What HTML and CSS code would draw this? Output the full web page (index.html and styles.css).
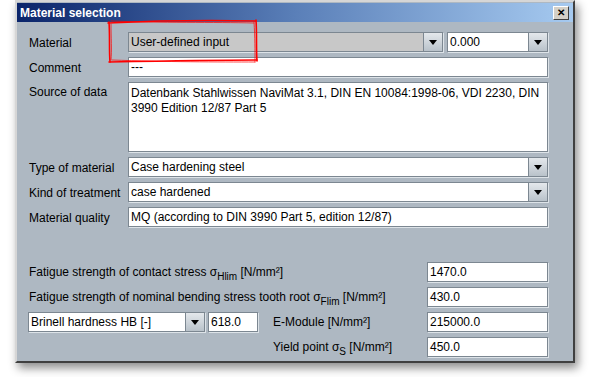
FILE: index.html
```html
<!DOCTYPE html>
<html lang="en">
<head>
  <meta charset="UTF-8" />
  <title>Material selection</title>
  <link rel="stylesheet" href="styles.css">
</head>
<body>
  <div class="window">
    <div class="titlebar">
      <span class="title">Material selection</span>
      <span class="close">&#x2715;</span>
    </div>

    <div class="content">
      <div class="row">
        <span class="lbl">Material</span>
        <div class="combo combo-off material-combo">
          <span class="combo-text">User-defined input</span>
          <span class="combo-btn"><i class="arrow"></i></span>
        </div>
        <div class="combo value-combo">
          <span class="combo-text">0.000</span>
          <span class="combo-btn"><i class="arrow"></i></span>
        </div>
      </div>

      <div class="row">
        <span class="lbl">Comment</span>
        <div class="field grow">---</div>
      </div>

      <div class="row row-tall">
        <span class="lbl">Source of data</span>
        <div class="field area grow">Datenbank Stahlwissen NaviMat 3.1, DIN EN 10084:1998-06, VDI 2230, DIN 3990 Edition 12/87 Part 5</div>
      </div>

      <div class="row">
        <span class="lbl">Type of material</span>
        <div class="combo grow">
          <span class="combo-text">Case hardening steel</span>
          <span class="combo-btn"><i class="arrow"></i></span>
        </div>
      </div>

      <div class="row">
        <span class="lbl">Kind of treatment</span>
        <div class="combo grow">
          <span class="combo-text">case hardened</span>
          <span class="combo-btn"><i class="arrow"></i></span>
        </div>
      </div>

      <div class="row">
        <span class="lbl">Material quality</span>
        <div class="field grow">MQ (according to DIN 3990 Part 5, edition 12/87)</div>
      </div>

      <div class="spacer"></div>

      <div class="row">
        <span class="lbl-long">Fatigue strength of contact stress &sigma;<sub>Hlim</sub> [N/mm&sup2;]</span>
        <div class="field num">1470.0</div>
      </div>

      <div class="row">
        <span class="lbl-long">Fatigue strength of nominal bending stress tooth root &sigma;<sub>Flim</sub> [N/mm&sup2;]</span>
        <div class="field num">430.0</div>
      </div>

      <div class="row">
        <div class="combo hardness-combo">
          <span class="combo-text">Brinell hardness HB [-]</span>
          <span class="combo-btn"><i class="arrow"></i></span>
        </div>
        <div class="field small">618.0</div>
        <span class="lbl-long side">E-Module [N/mm&sup2;]</span>
        <div class="field num">215000.0</div>
      </div>

      <div class="row">
        <span class="lbl-long side indent">Yield point &sigma;<sub>S</sub> [N/mm&sup2;]</span>
        <div class="field num">450.0</div>
      </div>
    </div>
  </div>

  <!-- red hand-drawn marker around the material combo -->
  <svg class="marker" width="590" height="377" viewBox="0 0 590 377">
    <path d="M108 23 C150 21 210 20 256 21" />
    <path d="M111 21 C160 23 215 22 254 23" class="thin" />
    <path d="M256 20 C257 35 256 48 257 61" />
    <path d="M254 22 C255 38 255 50 255 62" class="thin" />
    <path d="M109 62 C160 61 215 60 257 60" />
    <path d="M112 60 C165 62 220 62 255 62" class="thin" />
    <path d="M109 22 C110 36 109 50 110 62" />
    <path d="M111 24 C111 38 112 50 111 60" class="thin" />
  </svg>
</body>
</html>
```

FILE: styles.css
```css
* { margin: 0; padding: 0; box-sizing: border-box; }
body {
  background: #fff;
  font-family: "Liberation Sans", Arial, sans-serif;
  font-size: 12px;
  color: #000;
  width: 590px;
  height: 377px;
  overflow: hidden;
}

.window {
  margin-left: 15px;
  width: 560px;
  height: 363px;
  background: #aeb8c2;
  border: 2px solid;
  border-color: #d6d6d6 #404040 #404040 #d6d6d6;
  box-shadow: 3px 5px 9px rgba(0, 0, 0, 0.45);
}

.titlebar {
  height: 19px;
  margin: 1px 0 0;
  background: linear-gradient(to right, #0a246a 0%, #5a7fb8 50%, #a6caf0 100%);
  display: flex;
  align-items: center;
  justify-content: space-between;
  padding: 0 4px 0 3px;
}
.title {
  color: #fff;
  font-weight: bold;
  font-size: 12px;
}
.close {
  width: 16px;
  height: 14px;
  background: #d4d0c8;
  border: 1px solid;
  border-color: #fff #404040 #404040 #fff;
  font-size: 10px;
  font-weight: bold;
  line-height: 12px;
  text-align: center;
}

.content {
  padding: 10px 25px 0 12px;
  display: flex;
  flex-direction: column;
  gap: 5px;
}
.row {
  display: flex;
  align-items: center;
  height: 20px;
}
.row-tall {
  height: 70px;
  align-items: flex-start;
}
.spacer { height: 25px; }

.lbl {
  width: 99px;
  flex-shrink: 0;
  padding-top: 1px;
}
.row-tall .lbl { padding-top: 3px; }
.lbl-long {
  flex: 1;
  white-space: nowrap;
}
.lbl-long sub {
  font-size: 10px;
  vertical-align: -4px;
  line-height: 0;
}
.side { padding-left: 15px; }
.indent { padding-left: 244px; }

.field,
.combo {
  height: 20px;
  background: #fff;
  border: 1px solid #7c8791;
  box-shadow: 1px 1px 0 #dde3e8;
  white-space: nowrap;
  overflow: hidden;
}
.field {
  padding: 2px 2px 0;
  line-height: 15px;
}
.grow { flex: 1; }
.area {
  height: 70px;
  white-space: normal;
  padding-top: 3px;
}
.num { width: 121px; }
.small { width: 50px; margin-left: 3px; }

.combo {
  display: flex;
}
.combo-text {
  flex: 1;
  padding: 2px 2px 0;
  line-height: 15px;
}
.combo-off { background: #c8c8c8; }
.material-combo { width: 315px; }
.value-combo { width: 101px; margin-left: 4px; }
.hardness-combo { width: 177px; margin-left: -1px; }

.combo-btn {
  width: 19px;
  border-left: 1px solid #7c8791;
  background: linear-gradient(#e4e8ec, #b9c2ca);
  display: flex;
  align-items: center;
  justify-content: center;
}
.arrow {
  width: 0;
  height: 0;
  border-left: 4px solid transparent;
  border-right: 4px solid transparent;
  border-top: 5px solid #000;
  margin-top: 1px;
}

.marker {
  position: absolute;
  top: 0;
  left: 0;
  pointer-events: none;
}
.marker path {
  fill: none;
  stroke: #ff0000;
  stroke-width: 1.6;
  stroke-linecap: round;
}
.marker .thin {
  stroke-width: 1;
  opacity: 0.7;
}
```
